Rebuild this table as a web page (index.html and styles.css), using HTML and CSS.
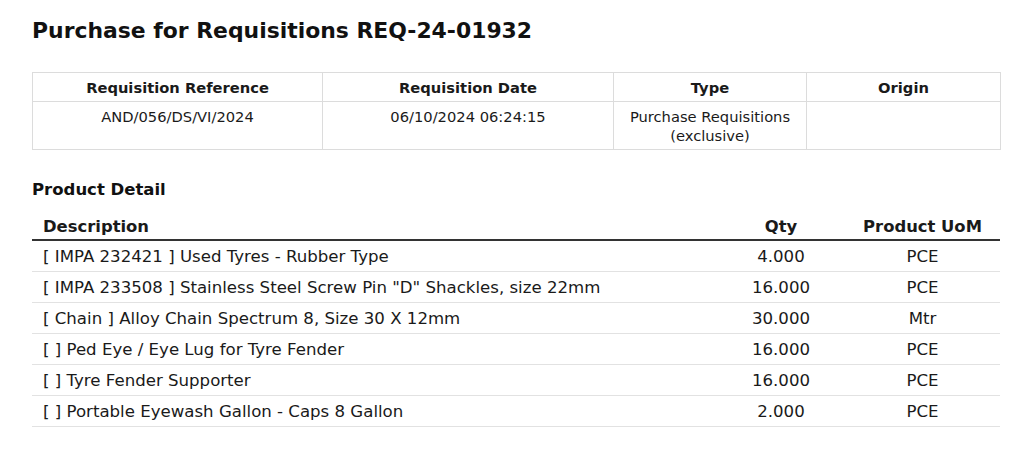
FILE: index.html
```html
<!DOCTYPE html>
<html>
<head>
<meta charset="utf-8">
<link rel="stylesheet" href="styles.css">
</head>
<body>
<div class="page">
  <h1 class="title">Purchase for Requisitions REQ-24-01932</h1>
  <table class="info">
    <colgroup>
      <col class="c1"><col class="c2"><col class="c3"><col class="c4">
    </colgroup>
    <thead>
      <tr><th>Requisition Reference</th><th>Requisition Date</th><th>Type</th><th>Origin</th></tr>
    </thead>
    <tbody>
      <tr><td>AND/056/DS/VI/2024</td><td>06/10/2024 06:24:15</td><td>Purchase Requisitions<br>(exclusive)</td><td></td></tr>
    </tbody>
  </table>
  <h2 class="section">Product Detail</h2>
  <table class="products">
    <colgroup>
      <col class="pdesc"><col class="pqty"><col class="puom">
    </colgroup>
    <thead>
      <tr><th class="left">Description</th><th>Qty</th><th>Product UoM</th></tr>
    </thead>
    <tbody>
      <tr><td class="left">[ IMPA 232421 ] Used Tyres - Rubber Type</td><td>4.000</td><td>PCE</td></tr>
      <tr><td class="left">[ IMPA 233508 ] Stainless Steel Screw Pin "D" Shackles, size 22mm</td><td>16.000</td><td>PCE</td></tr>
      <tr><td class="left">[ Chain ] Alloy Chain Spectrum 8, Size 30 X 12mm</td><td>30.000</td><td>Mtr</td></tr>
      <tr><td class="left">[ ] Ped Eye / Eye Lug for Tyre Fender</td><td>16.000</td><td>PCE</td></tr>
      <tr><td class="left">[ ] Tyre Fender Supporter</td><td>16.000</td><td>PCE</td></tr>
      <tr><td class="left">[ ] Portable Eyewash Gallon - Caps 8 Gallon</td><td>2.000</td><td>PCE</td></tr>
    </tbody>
  </table>
</div>
</body>
</html>
```

FILE: styles.css
```css
html, body {
  margin: 0;
  padding: 0;
  background: #ffffff;
}
body {
  font-family: "DejaVu Sans", Verdana, sans-serif;
  color: #1a1a1a;
}
.page {
  padding: 17px 24px 0 32px;
  width: 968px;
}
.title {
  font-size: 21.9px;
  font-weight: bold;
  margin: 0 0 27px 0;
  line-height: 28px;
  color: #111;
}
.info {
  width: 968px;
  border-collapse: collapse;
  table-layout: fixed;
  font-size: 14.7px;
}
.info .c1 { width: 290px; }
.info .c2 { width: 291px; }
.info .c3 { width: 193px; }
.info .c4 { width: 194px; }
.info th, .info td {
  border: 1px solid #dcdcdc;
  text-align: center;
}
.info th {
  height: 28px;
  padding: 0 4px;
  font-weight: bold;
  vertical-align: middle;
}
.info td {
  height: 48px;
  padding: 5px 4px 0 4px;
  vertical-align: top;
  line-height: 19px;
  box-sizing: border-box;
}
.section {
  font-size: 16.5px;
  font-weight: bold;
  margin: 29px 0 0 0;
  line-height: 22px;
  color: #111;
}
.products {
  width: 968px;
  border-collapse: collapse;
  table-layout: fixed;
  margin-top: 9px;
  font-size: 16.6px;
}
.products .pdesc { width: 685px; }
.products .pqty { width: 128px; }
.products .puom { width: 155px; }
.products th {
  font-weight: bold;
  text-align: center;
  height: 26px;
  padding: 0 0 3px 0;
  border-bottom: 2px solid #333;
  vertical-align: bottom;
  font-size: 16.4px;
}
.products td {
  text-align: center;
  height: 30px;
  padding: 0;
  border-bottom: 1px solid #e2e2e2;
  vertical-align: middle;
}
.products .left {
  text-align: left;
  padding-left: 11px;
}
```
